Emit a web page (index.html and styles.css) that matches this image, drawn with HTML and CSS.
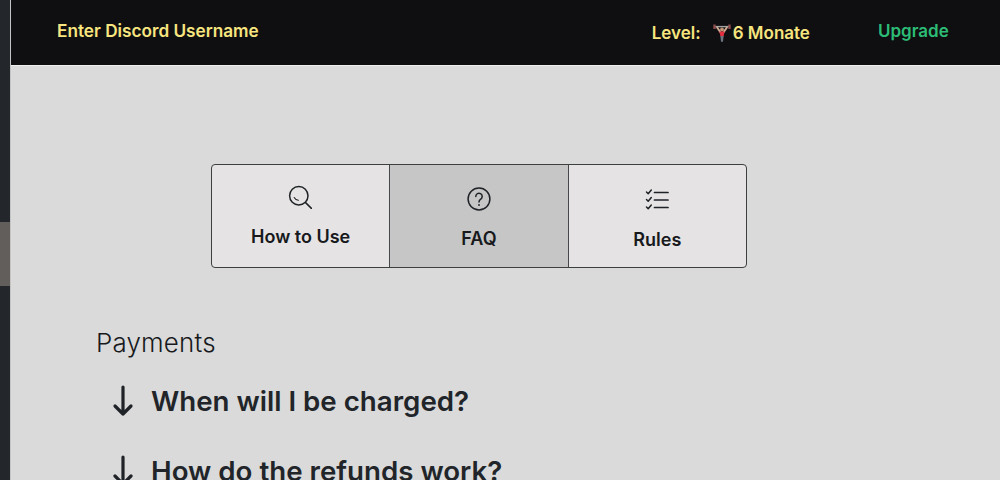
FILE: index.html
```html
<!DOCTYPE html>
<html lang="en">
<head>
<meta charset="utf-8">
<title>FAQ</title>
<link rel="stylesheet" href="styles.css">
</head>
<body>
<div class="app">
  <aside class="rail"><div class="rail-top"></div><div class="rail-thumb"></div><div class="rail-bottom"></div></aside>
  <div class="main">
    <header class="topbar">
      <span class="username">Enter Discord Username</span>
      <div class="level">
        <span class="level-label">Level:</span>
        <svg class="lifter" viewBox="0 0 18 18" aria-hidden="true">
          <path d="M1.5 2.6 L16.5 2.6" stroke="#a5a5a5" stroke-width="1.4"/>
          <path d="M1.5 0.6V5M16.5 0.6V5" stroke="#8c4a4a" stroke-width="2.4"/>
          <path d="M3.8 3 L7.6 8.5M14.2 3 L10.4 8.5" stroke="#d0ab93" stroke-width="2"/>
          <circle cx="9" cy="5.4" r="1.9" fill="#c29478"/>
          <path d="M6.4 7.5h5.2L10.6 12.5H7.4z" fill="#e0303f"/>
          <path d="M7.4 12h3.2L10 17.8H8z" fill="#6d7580"/>
        </svg>
        <span class="level-value">6 Monate</span>
      </div>
      <span class="upgrade">Upgrade</span>
    </header>
    <section class="content">
      <nav class="tabs">
        <div class="tab">
          <svg class="icon icon-search" viewBox="0 0 24 24" fill="none" stroke="#1f2226" stroke-width="1.5" stroke-linecap="round">
            <circle cx="10.8" cy="10.8" r="9.2"/>
            <path d="M17.6 17.6 L23.4 23.4"/>
            <path d="M6.2 12.6c.9 1.7 2.4 2.6 4.2 2.7" stroke-width="1.1"/>
          </svg>
          <span class="tab-label">How to Use</span>
        </div>
        <div class="tab tab-active">
          <svg class="icon icon-help" viewBox="0 0 24 24" fill="none" stroke="#1f2226" stroke-width="1.5" stroke-linecap="round">
            <circle cx="12" cy="12" r="10.9"/>
            <path d="M8.8 9.4a3.2 3.2 0 1 1 5 2.7c-1.1.8-1.8 1.4-1.8 2.8"/>
            <circle cx="12" cy="18" r=".95" fill="#1f2226" stroke="none"/>
          </svg>
          <span class="tab-label">FAQ</span>
        </div>
        <div class="tab tab-rules">
          <svg class="icon icon-rules" viewBox="0 0 24 24" fill="none" stroke="#1f2226" stroke-width="1.5" stroke-linecap="round" stroke-linejoin="round">
            <path d="M9.5 4.5H23M9.5 12H23M9.5 19.5H23" stroke-width="1.7"/>
            <path d="M1.5 4l1.7 1.7L6.3 2M1.5 11.5l1.7 1.7L6.3 9.5M1.5 19l1.7 1.7L6.3 17"/>
          </svg>
          <span class="tab-label">Rules</span>
        </div>
      </nav>
      <h2 class="section-title">Payments</h2>
      <ul class="faq">
        <li class="faq-item">
          <svg class="arrow" viewBox="0 0 22 32" fill="none" stroke="#1f2226" stroke-width="3.2" stroke-linecap="round" stroke-linejoin="round"><path d="M11 2V29M3 21 L11 29 L19 21"/></svg>
          <span>When will I be charged?</span>
        </li>
        <li class="faq-item">
          <svg class="arrow" viewBox="0 0 22 32" fill="none" stroke="#1f2226" stroke-width="3.2" stroke-linecap="round" stroke-linejoin="round"><path d="M11 2V29M3 21 L11 29 L19 21"/></svg>
          <span>How do the refunds work?</span>
        </li>
      </ul>
    </section>
  </div>
</div>
</body>
</html>
```
FILE: styles.css
```css
* { box-sizing: border-box; }
html, body { margin: 0; height: 100%; overflow: hidden; }
body { font-family: Inter, "Liberation Sans", sans-serif; background: #dadada; }
.app { display: flex; width: 1000px; height: 480px; overflow: hidden; }
.rail { width: 10px; flex: none; display: flex; flex-direction: column; }
.rail-top { height: 222px; background: #23272b; }
.rail-thumb { height: 64px; background: #625e5b; }
.rail-bottom { flex: 1; background: #23272b; }
.main { flex: 1; min-width: 0; display: flex; flex-direction: column; background: #dadada; border-left: 1px solid #c4c4c4; }
.topbar { height: 66px; flex: none; background: #0f0f11; border-bottom: 1px solid #efefef; display: flex; align-items: flex-start; padding-left: 46px; font-size: 17px; font-weight: 600; }
.username { color: #f7e57f; font-size: 17.2px; margin-top: 20px; line-height: 22px; }
.level { margin-left: 393px; margin-top: 22px; display: flex; align-items: center; color: #f7e57f; line-height: 22px; }
.level-label { margin-right: 12px; }
.lifter { width: 18px; height: 18px; margin-right: 2px; }
.upgrade { color: #2cbc76; margin-left: 68px; margin-top: 20px; line-height: 22px; }
.content { flex: 1; position: relative; padding: 98px 0 0 85px; }
.tabs { display: flex; width: 536px; height: 104px; margin-left: 115px; border: 1px solid #3c3e40; border-radius: 4px; overflow: hidden; background: #e5e3e3; }
.tab { flex: 1; display: flex; flex-direction: column; align-items: center; padding-top: 22px; color: #17191c; }
.tab + .tab { border-left: 1px solid #45474a; }
.tab-active { background: #c6c6c6; }
.icon { width: 24px; height: 24px; display: block; }
.icon-search { margin: -2px 1px 2px 0; }
.tab-label { font-size: 18px; font-weight: 600; line-height: 24px; margin-top: 14px; }
.tab-active .tab-label { margin-top: 16px; }
.tab-rules .tab-label { margin-top: 16px; }
.tab-rules .icon { margin-top: 1px; }
.section-title { margin: 59px 0 0; font-size: 25.9px; font-weight: 300; line-height: 32px; color: #17191c; letter-spacing: 0.2px; }
.faq { list-style: none; margin: 24px 0 0; padding: 0 0 0 16px; }
.faq-item { display: flex; align-items: center; font-size: 27.7px; font-weight: 600; line-height: 36px; color: #212529; margin-bottom: 34px; }
.arrow { width: 22px; height: 32px; flex: none; margin-right: 17px; }
```
